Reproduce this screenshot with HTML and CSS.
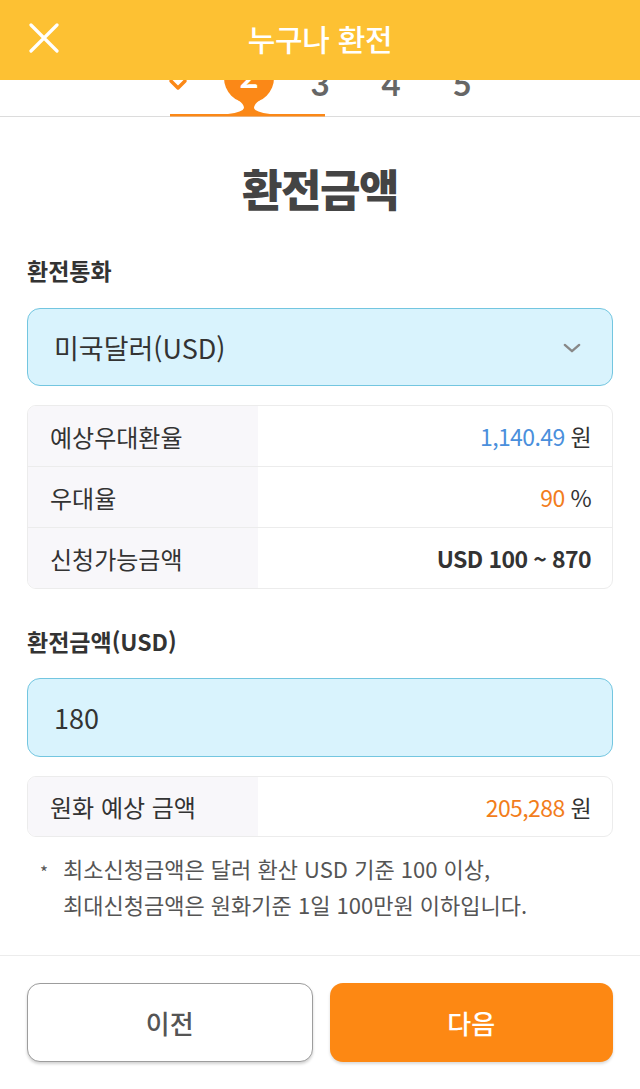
FILE: index.html
```html
<!DOCTYPE html>
<html lang="ko">
<head>
<meta charset="utf-8">
<link rel="stylesheet" href="styles.css">
</head>
<body>
<div class="page">
  <header class="topbar">
    <svg class="close" viewBox="0 0 30 30" width="30" height="30"><path d="M2 2 L28 28 M28 2 L2 28" stroke="#fff" stroke-width="3.2" stroke-linecap="round" fill="none"/></svg>
    <h1 class="topbar-title">누구나 환전</h1>
  </header>

  <nav class="steps">
    <svg class="steps-deco" viewBox="165 50 165 67" width="165" height="67">
      <circle cx="249" cy="78" r="25" fill="#fb8817"/>
      <path d="M238 100 Q244 104 244 108 Q243 112 228 114 L270 114 Q255 112 254 108 Q254 104 260 100 Z" fill="#fb8817"/>
      <rect x="170" y="114" width="155" height="2.5" fill="#fb8817"/>
    </svg>
    <div class="step done">
      <svg class="check" viewBox="0 0 20 20" width="20" height="20"><path d="M3 8 L10 15 L17 8" stroke="#fb8817" stroke-width="3.5" stroke-linecap="round" stroke-linejoin="round" fill="none"/></svg>
    </div>
    <div class="step active">2</div>
    <div class="step">3</div>
    <div class="step">4</div>
    <div class="step">5</div>
  </nav>

  <main class="content">
    <h2 class="title">환전금액</h2>

    <h3 class="label">환전통화</h3>
    <div class="field select">
      <span>미국달러(USD)</span>
      <svg class="chev" viewBox="0 0 20 12" width="18" height="11"><path d="M2 2 L10 9 L18 2" stroke="#888" stroke-width="2.6" stroke-linecap="round" stroke-linejoin="round" fill="none"/></svg>
    </div>

    <div class="table">
      <div class="row">
        <div class="th">예상우대환율</div>
        <div class="td"><span class="blue">1,140.49</span> 원</div>
      </div>
      <div class="row">
        <div class="th">우대율</div>
        <div class="td"><span class="orange">90</span> %</div>
      </div>
      <div class="row">
        <div class="th">신청가능금액</div>
        <div class="td bold">USD 100 ~ 870</div>
      </div>
    </div>

    <h3 class="label label-2">환전금액(USD)</h3>
    <div class="field input"><span>180</span></div>

    <div class="table table-2">
      <div class="row">
        <div class="th">원화 예상 금액</div>
        <div class="td"><span class="orange">205,288</span> 원</div>
      </div>
    </div>

    <p class="note"><span class="star">*</span><span>최소신청금액은 달러 환산 USD 기준 100 이상,<br>최대신청금액은 원화기준 1일 100만원 이하입니다.</span></p>
  </main>

  <footer class="footer">
    <button class="btn btn-prev">이전</button>
    <button class="btn btn-next">다음</button>
  </footer>
</div>
</body>
</html>
```

FILE: styles.css
```css
* { box-sizing: border-box; }
html, body { margin: 0; padding: 0; background: #fff; }
body {
  font-family: "Noto Sans CJK KR", "Noto Sans", sans-serif;
  color: #333;
}
.page { position: relative; width: 640px; min-height: 1089px; overflow: hidden; }

.topbar {
  position: absolute;
  top: 0; left: 0; right: 0;
  height: 80px;
  background: #fdc133;
  display: flex;
  align-items: center;
  justify-content: center;
  z-index: 5;
}
.close { position: absolute; left: 29px; top: 23px; }
.topbar-title {
  margin: 0;
  color: #fff;
  font-size: 30px;
  font-weight: 500;
  letter-spacing: -0.3px;
  margin-top: -4px;
}

.steps {
  position: relative;
  height: 117px;
  border-bottom: 1px solid #dcdcdc;
  display: flex;
  justify-content: center;
  padding-top: 58px;
}
.steps-deco { position: absolute; left: 165px; top: 50px; }
.step {
  position: relative;
  width: 71px;
  text-align: center;
  font-size: 33px;
  font-weight: 700;
  line-height: 50px;
  height: 50px;
  color: #666;
  font-family: "Lato", "Noto Sans", sans-serif;
}
.step.active { color: #fff; margin-top: -8px; }
.step.done .check { position: absolute; left: 25px; top: 15px; }

.content { padding: 0 27px; }
.title {
  margin: 46px 0 0;
  text-align: center;
  font-size: 44px;
  line-height: 50px;
  font-weight: 900;
  color: #444;
  letter-spacing: -1.5px;
}
.label {
  margin: 42px 0 0;
  font-size: 23px;
  line-height: 30px;
  font-weight: 700;
  color: #333;
}
.label-2 { margin-top: 37px; }

.field {
  margin-top: 23px;
  height: 78px;
  border: 1px solid #73c6e0;
  border-radius: 13px;
  background: #d9f3fd;
  display: flex;
  align-items: center;
  justify-content: space-between;
  padding: 0 31px 0 26px;
  font-size: 27px;
  color: #333;
}
.field.input { margin-top: 22px; height: 79px; }
.chev { margin-top: 2px; }

.table {
  margin-top: 19px;
  border: 1px solid #ececec;
  border-radius: 9px;
  overflow: hidden;
}
.row {
  display: flex;
  height: 61px;
  border-top: 1px solid #ececec;
}
.row:first-child { border-top: none; height: 60px; }
.table-2 .row { height: 59px; }
.th {
  width: 230px;
  background: #f8f7fa;
  display: flex;
  align-items: center;
  padding-left: 22px;
  font-size: 24px;
  color: #333;
}
.td {
  flex: 1;
  display: flex;
  align-items: center;
  justify-content: flex-end;
  padding-right: 21px;
  font-size: 23px;
  color: #333;
  white-space: pre;
  letter-spacing: -0.6px;
}
.td.bold { font-weight: 700; }
.blue { color: #4a8fdc; }
.orange { color: #f27d1c; }

.note {
  margin: 13px 0 0;
  display: flex;
  font-size: 22px;
  line-height: 36px;
  color: #555;
}
.star { width: 36px; padding-left: 13px; font-size: 17px; color: #555; margin-top: 4px; }

.footer {
  position: absolute;
  left: 0; right: 0; top: 955px;
  border-top: 1px solid #ececec;
  display: flex;
  gap: 17px;
  padding: 27px 27px 0;
}
.btn {
  flex: 1;
  height: 79px;
  border-radius: 13px;
  font-family: "Noto Sans CJK KR", "Noto Sans", sans-serif;
  font-size: 26px;
  font-weight: 500;
  cursor: pointer;
}
.btn-prev {
  background: #fff;
  border: 1px solid #9d9d9d;
  color: #555;
  box-shadow: 0 2px 3px rgba(0,0,0,0.18);
}
.btn-next {
  background: #fd8813;
  border: none;
  color: #fff;
  box-shadow: 0 2px 3px rgba(0,0,0,0.15);
}
```
